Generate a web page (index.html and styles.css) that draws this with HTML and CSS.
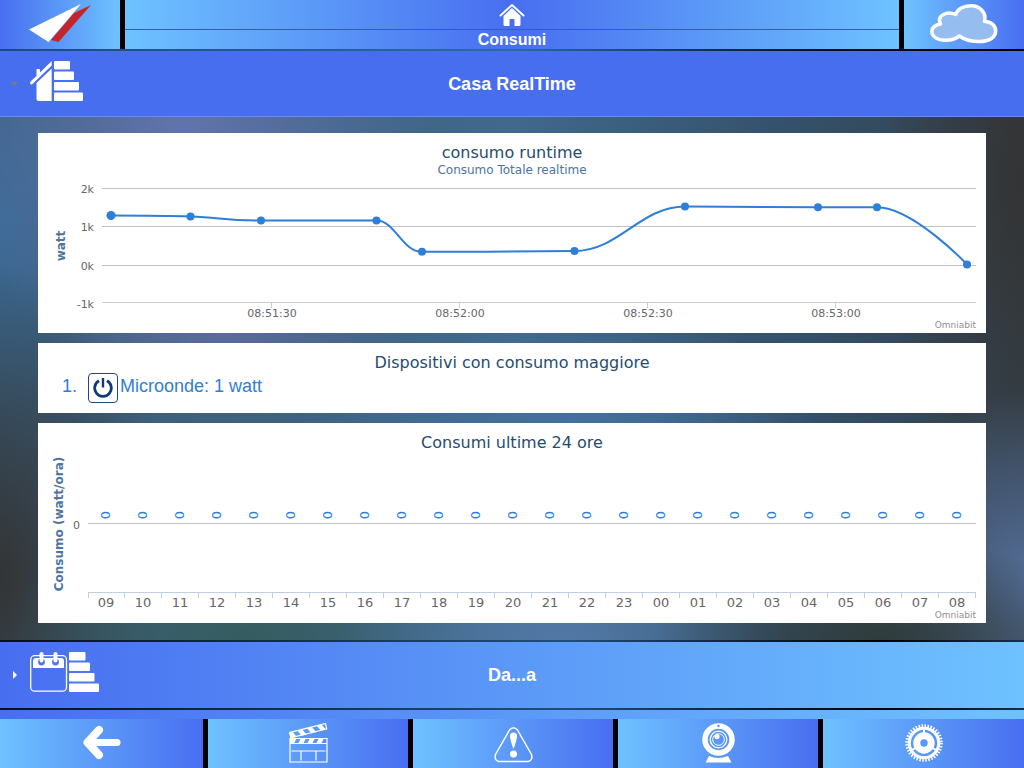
FILE: index.html
```html
<!DOCTYPE html>
<html lang="it">
<head>
<meta charset="utf-8">
<meta name="viewport" content="width=device-width, initial-scale=1">
<title>Consumi</title>
<link rel="stylesheet" href="styles.css">
</head>
<body>
<header class="topbar">
  <a class="topbar-side topbar-logo" href="#" aria-label="Omniabit">
    <svg width="62" height="40" viewBox="0 0 62 40" aria-hidden="true">
      <path fill="#c62429" d="M22 36L45 9L62 1L29.500 38Z"/>
      <path fill="#fff" d="M0 25.500L52 0L19.500 38Z"/>
    </svg>
  </a>
  <a class="topbar-home" href="#">
    <span class="home-icon">
      <svg width="26" height="23" viewBox="0 0 26 23" aria-hidden="true">
        <path fill="none" stroke="#fff" stroke-width="2" stroke-linecap="round" stroke-linejoin="round" d="M1.500 11.500L13 1L24.500 11.500"/>
        <path fill="#fff" d="M4.500 12L13 4L21.500 12V20.500Q21.500 22 20 22H15.500V16Q15.500 15 14.500 15H11.500Q10.500 15 10.500 16V22H6Q4.500 22 4.500 20.500Z"/>
      </svg>
    </span>
    <span class="home-label">Consumi</span>
  </a>
  <a class="topbar-side topbar-cloud" href="#" aria-label="Meteo">
    <svg width="68" height="40" viewBox="0 0 68 40" aria-hidden="true">
      <path fill="#95bdef" stroke="#fff" stroke-width="3.500" stroke-linejoin="round" d="M10.500 20C5 20.500 1.800 24 1.800 27.500C2 33.500 9 36.500 16 36.300C22 36.200 26 34.500 29.300 32C35 36 42 37.600 49 37.600C60 37.600 65.700 33 65.700 27C65.700 21.500 61 17.500 54.500 17.500C57 9 50 1.800 41 1.800C33 1.800 27 5.500 25.700 10.500C17.500 7 6 11 10.500 20Z"/>
    </svg>
  </a>
</header>

<main class="sections">
  <button class="section-bar section-open" type="button" aria-expanded="true">
    <span class="section-lead">
      <span class="marker marker-down"></span>
      <svg width="54" height="40" viewBox="0 0 54 40" fill="#fff" aria-hidden="true">
        <path d="M21.700 0V4.500L2.500 23Q1 24 0 22.500Q0 21 1 20L6.500 15V9Q6.500 8 7.500 8H9Q10 8 10 9V11.500Z"/>
        <path d="M21.700 7.500V40H9Q6.500 40 6.500 37.500V22Z"/>
        <rect x="24" width="16" height="8.500" rx="1"/>
        <rect x="24" y="10.500" width="20" height="8.500" rx="1"/>
        <rect x="24" y="21" width="25" height="8.500" rx="1"/>
        <rect x="24" y="31.500" width="29" height="8.500" rx="1"/>
      </svg>
    </span>
    <span class="section-title">Casa RealTime</span>
  </button>

  <div class="panels">
    <section class="panel">
      <h2 class="panel-title">consumo runtime</h2>
      <p class="panel-subtitle">Consumo Totale realtime</p>
      <svg class="chart" viewBox="0 0 948 156" role="img" aria-label="Consumo Totale realtime">
        <path class="grid-line" d="M64 11.500H938M64 49.500H938M64 88.500H938"/>
        <path class="axis-line" d="M64 125.500H938M233.500 126v5M421.500 126v5M609.500 126v5M797.500 126v5"/>
        <g class="tick-label tick-y">
          <text x="56" y="16">2k</text>
          <text x="56" y="54">1k</text>
          <text x="56" y="93">0k</text>
          <text x="56" y="131">-1k</text>
        </g>
        <g class="tick-label tick-x">
          <text x="234" y="140">08:51:30</text>
          <text x="422" y="140">08:52:00</text>
          <text x="610" y="140">08:52:30</text>
          <text x="798" y="140">08:53:00</text>
        </g>
        <text class="axis-title" transform="rotate(-90)" x="-69" y="27">watt</text>
        <path class="series-line" d="M73 38.500C73 38.500 125 38.500 152.500 39.500C182 40.500 187 43.500 223 43.500H338.500C357 43.500 364 74.800 384 74.800C430 74.800 500 74.500 536.500 74C581 74 602 29.500 647 29.500C700 29.500 740 30.200 780 30.200H839C875 30.200 929 87.500 929 87.500"/>
        <g class="series-point">
          <circle cx="73" cy="38.500" r="4.500"/>
          <circle cx="152.500" cy="39.500" r="4"/>
          <circle cx="223" cy="43.500" r="4"/>
          <circle cx="338.500" cy="43.500" r="4"/>
          <circle cx="384" cy="74.800" r="4"/>
          <circle cx="536.500" cy="74" r="4"/>
          <circle cx="647" cy="29.500" r="4"/>
          <circle cx="780" cy="30.200" r="4"/>
          <circle cx="839" cy="30.200" r="4"/>
          <circle cx="929" cy="87.500" r="4"/>
        </g>
        <text class="credit" x="938" y="151">Omniabit</text>
      </svg>
    </section>

    <section class="panel">
      <h2 class="panel-title">Dispositivi con consumo maggiore</h2>
      <ol class="devices">
        <li class="device">
          <button class="power" type="button" aria-label="Spegni Microonde">
            <svg width="20" height="20" viewBox="0 0 20 20" fill="none" stroke="#0f3b78" aria-hidden="true">
              <path stroke-width="2.800" d="M6 2.800A8.300 8.300 0 1 0 14 2.800"/>
              <path stroke-width="2.400" d="M10 0V9.500"/>
            </svg>
          </button>
          <span>Microonde: 1 watt</span>
        </li>
      </ol>
    </section>

    <section class="panel">
      <h2 class="panel-title">Consumi ultime 24 ore</h2>
      <svg class="chart" viewBox="0 0 948 170" role="img" aria-label="Consumi ultime 24 ore">
        <path class="grid-line" d="M50 70.500H938"/>
        <path class="axis-line" d="M50 139.500H938M50.500 140v5M86.500 140v5M123.500 140v5M160.500 140v5M197.500 140v5M234.500 140v5M271.500 140v5M308.500 140v5M345.500 140v5M382.500 140v5M419.500 140v5M456.500 140v5M493.500 140v5M530.500 140v5M567.500 140v5M604.500 140v5M641.500 140v5M678.500 140v5M715.500 140v5M752.500 140v5M789.500 140v5M826.500 140v5M863.500 140v5M900.500 140v5M937.500 140v5"/>
        <text class="tick-label tick-y" x="42" y="76">0</text>
        <text class="axis-title" transform="rotate(-90)" x="-71" y="25">Consumo (watt/ora)</text>
        <g class="value-label" transform="rotate(-90)">
          <text x="-62" y="72">0</text><text x="-62" y="109">0</text>
          <text x="-62" y="146">0</text><text x="-62" y="183">0</text>
          <text x="-62" y="220">0</text><text x="-62" y="257">0</text>
          <text x="-62" y="294">0</text><text x="-62" y="331">0</text>
          <text x="-62" y="368">0</text><text x="-62" y="405">0</text>
          <text x="-62" y="442">0</text><text x="-62" y="479">0</text>
          <text x="-62" y="516">0</text><text x="-62" y="553">0</text>
          <text x="-62" y="590">0</text><text x="-62" y="627">0</text>
          <text x="-62" y="664">0</text><text x="-62" y="701">0</text>
          <text x="-62" y="738">0</text><text x="-62" y="775">0</text>
          <text x="-62" y="812">0</text><text x="-62" y="849">0</text>
          <text x="-62" y="886">0</text><text x="-62" y="923">0</text>
        </g>
        <g class="hour-label">
          <text x="68" y="154">09</text><text x="105" y="154">10</text>
          <text x="142" y="154">11</text><text x="179" y="154">12</text>
          <text x="216" y="154">13</text><text x="253" y="154">14</text>
          <text x="290" y="154">15</text><text x="327" y="154">16</text>
          <text x="364" y="154">17</text><text x="401" y="154">18</text>
          <text x="438" y="154">19</text><text x="475" y="154">20</text>
          <text x="512" y="154">21</text><text x="549" y="154">22</text>
          <text x="586" y="154">23</text><text x="623" y="154">00</text>
          <text x="660" y="154">01</text><text x="697" y="154">02</text>
          <text x="734" y="154">03</text><text x="771" y="154">04</text>
          <text x="808" y="154">05</text><text x="845" y="154">06</text>
          <text x="882" y="154">07</text><text x="919" y="154">08</text>
        </g>
        <text class="credit" x="938" y="165">Omniabit</text>
      </svg>
    </section>
  </div>

  <button class="section-bar section-closed" type="button" aria-expanded="false">
    <span class="section-lead">
      <span class="marker marker-right"></span>
      <svg width="70" height="40" viewBox="0 0 70 40" fill="#fff" aria-hidden="true">
        <rect x=".7" y="3.700" width="35.800" height="35.500" rx="4" fill="none" stroke="#fff" stroke-width="1.300"/>
        <path d="M3 9Q3 6 6 6H31Q34 6 34 9V16H3Z"/>
        <circle cx="11.500" cy="10" r="3.400" fill="#4b74f1"/>
        <circle cx="25.500" cy="10" r="3.400" fill="#4b74f1"/>
        <rect x="9.500" width="4" height="10.500" rx="2"/>
        <rect x="23.500" width="4" height="10.500" rx="2"/>
        <rect x="39" width="16.500" height="8.500" rx="1"/>
        <rect x="39" y="10.500" width="21" height="8.500" rx="1"/>
        <rect x="39" y="21" width="25.500" height="8.500" rx="1"/>
        <rect x="39" y="31.500" width="30" height="8.500" rx="1"/>
      </svg>
    </span>
    <span class="section-title">Da...a</span>
  </button>
</main>

<nav class="toolbar">
  <button class="tool" type="button" aria-label="Indietro">
    <svg width="40" height="40" viewBox="0 0 40 40" fill="none" stroke="#fff" aria-hidden="true">
      <path stroke-width="8" stroke-linecap="round" stroke-linejoin="round" d="M17 7L5.500 19.500L17 32"/>
      <path stroke-width="7" stroke-linecap="round" d="M9 19.500H35"/>
    </svg>
  </button>
  <button class="tool" type="button" aria-label="Scenari">
    <svg width="40" height="40" viewBox="0 0 40 40" fill="none" stroke="#fff" aria-hidden="true">
      <path stroke-width="1.200" d="M2 15.500H39V39H2ZM2 20.500H39M3.500 28H37.500M13 28V37.500M28 28V37.500"/>
      <path fill="#fff" stroke="none" d="M2 15H9L5.500 21H2ZM13 15H18L15 21H10ZM22 15H27L24 21H19ZM31 15H36L33 21H28Z"/>
      <g transform="translate(1.500 9.500) rotate(-14)">
        <path stroke-width="1.200" d="M0 0H37V5.500H0Z"/>
        <path fill="#fff" stroke="none" d="M0 0H3L6 6H0ZM8 0H13L16 6H11ZM18 0H23L26 6H21ZM28 0H33L36 6H31Z"/>
      </g>
    </svg>
  </button>
  <button class="tool" type="button" aria-label="Allarmi">
    <svg width="40" height="40" viewBox="0 0 40 40" aria-hidden="true">
      <path fill="none" stroke="#fff" stroke-width="1.500" stroke-linejoin="round" d="M16.500 7Q20.500 2.500 24.500 7L38.500 31.500Q40 37.500 35 38.500H6Q1 37.500 2.500 31.500Z"/>
      <path fill="#fff" d="M17 13Q17 9.500 20.500 9.500Q24 9.500 24 13Q24 17 20.500 26Q17 17 17 13Z"/>
      <circle cx="20.500" cy="31" r="3.500" fill="#fff"/>
    </svg>
  </button>
  <button class="tool" type="button" aria-label="Telecamere">
    <svg width="40" height="40" viewBox="0 0 40 40" fill="none" stroke="#fff" aria-hidden="true">
      <circle cx="20.500" cy="16.500" r="13.500" stroke-width="5.500"/>
      <circle cx="20.500" cy="16.500" r="8.300" stroke-width="1.300"/>
      <circle cx="20.500" cy="16.500" r="5.800" stroke-width="1"/>
      <circle cx="19" cy="13.500" r="2.600" fill="#fff" stroke="none"/>
      <circle cx="20.500" cy="3" r="1.200" fill="#5b93f6" stroke="none"/>
      <path fill="#fff" stroke="none" d="M11 33Q20 37 30 33L33.500 39.500H7.500Z"/>
    </svg>
  </button>
  <button class="tool" type="button" aria-label="Impostazioni">
    <svg width="40" height="40" viewBox="0 0 40 40" fill="none" stroke="#fff" aria-hidden="true">
      <circle cx="20" cy="20" r="17" stroke-width="3.500" stroke-dasharray="1.500 1.467"/>
      <circle cx="20" cy="20" r="14.700" stroke-width="3"/>
      <circle cx="20" cy="20" r="7.200" stroke-width="7"/>
      <path stroke-width="2" d="M20 11V6M27 24L32 27M13 24L8 27"/>
    </svg>
  </button>
</nav>
</body>
</html>
```
FILE: styles.css
```css
:root {
  --deep: #486ef0;
  --light: #6ec2ff;
  --sans: "Liberation Sans", Arial, sans-serif;
  --chart: "DejaVu Sans", Verdana, sans-serif;
}

* {
  box-sizing: border-box;
}

body {
  margin: 0;
  min-height: 100vh;
  display: flex;
  flex-direction: column;
  background: linear-gradient(to right, var(--deep), var(--light));
  font-family: var(--sans);
  color: #fff;
}

button {
  border: 0;
  padding: 0;
  font: inherit;
  color: inherit;
  cursor: pointer;
}

svg {
  display: block;
}

/* Top bar */

.topbar {
  display: grid;
  grid-template-columns: 120px 1fr 120px;
  gap: 5px;
  height: 49px;
  background: #000;
}

.topbar-side {
  display: flex;
  align-items: center;
  justify-content: center;
  padding-bottom: 2px;
}

.topbar-logo {
  background: linear-gradient(to right, var(--deep), var(--light));
}

.topbar-cloud {
  background: linear-gradient(to right, var(--light), var(--deep));
}

.topbar-home {
  display: grid;
  grid-template-rows: 30px 19px;
  justify-items: center;
  background: linear-gradient(to right, var(--light), var(--deep), var(--light));
  color: #fff;
  text-decoration: none;
}

.home-icon {
  display: flex;
  justify-content: center;
  width: 100%;
  padding-top: 4px;
  border-bottom: 1px solid #2f61a6;
}

.home-label {
  font-size: 16px;
  font-weight: bold;
  line-height: 20px;
}

/* Collapsible sections */

.section-bar {
  display: grid;
  grid-template-columns: 1fr auto 1fr;
  align-items: center;
  width: 100%;
  text-align: left;
}

.section-open {
  height: 68px;
  padding-bottom: 6px;
  border-top: 2px solid;
  border-image: linear-gradient(to right, #1b4a80, #2b6c9c 50%, #02101c 80%, #000) 2 0 0 0;
  background: var(--deep);
  box-shadow: inset 0 -1px #6c8af3;
}

.section-closed {
  height: 70px;
  padding-bottom: 6px;
  border-top: 2px solid;
  border-bottom: 2px solid;
  border-image: linear-gradient(to right, #0a1018, #0c3038 25%, #204e7c 55%, #000 86%, #1c2c50) 2 0;
  background: linear-gradient(to right, var(--deep), var(--light));
}

.section-lead {
  display: flex;
  align-items: center;
  padding-left: 11px;
}

.marker {
  width: 19px;
  height: 8px;
}

.marker::before {
  content: "";
  display: block;
  background: #fff;
}

.marker-down::before {
  width: 7px;
  height: 4px;
  margin-top: 5px;
  background: #7d7a78;
  clip-path: polygon(0 0, 100% 0, 50% 100%);
}

.marker-right::before {
  width: 4px;
  height: 8px;
  margin-top: 3px;
  margin-left: 2px;
  clip-path: polygon(0 0, 100% 50%, 0 100%);
}

.section-title {
  padding-top: 6px;
  font-size: 18px;
  font-weight: bold;
  line-height: 20px;
}

/* Panels */

.panels {
  display: flex;
  flex-direction: column;
  gap: 10px;
  padding: 16px 38px 17px;
  background:
    radial-gradient(ellipse 22% 20% at 86% 100%, #303c3b, transparent),
    radial-gradient(ellipse 16% 38% at 101% 90%, #56709c, transparent),
    radial-gradient(ellipse 22% 30% at 55% 100%, #5279a6, transparent),
    radial-gradient(ellipse 24% 24% at 24% 100%, #355d5f, transparent),
    radial-gradient(ellipse 16% 60% at 0% 88%, #333435, transparent),
    radial-gradient(ellipse 24% 50% at 18% 0%, #6274ae, transparent),
    radial-gradient(ellipse 12% 50% at 0% 20%, #3a6a96, transparent),
    radial-gradient(ellipse 18% 16% at 22% 42%, #5a6999, transparent),
    radial-gradient(ellipse 24% 20% at 56% 58%, #43709e, transparent),
    radial-gradient(ellipse 15% 70% at 101% 12%, #333, transparent),
    linear-gradient(to right, #3b5a72, #40698c 50%, #34506a 78%, #35424c);
}

.panel {
  padding-top: 10px;
  background: #fff;
  color: #2f7ed8;
}

.panel-title {
  margin: 0;
  font-family: var(--chart);
  font-size: 16px;
  font-weight: normal;
  line-height: 20px;
  text-align: center;
  color: #274b6d;
}

.panel-subtitle {
  margin: 0;
  font-family: var(--chart);
  font-size: 12px;
  line-height: 14px;
  text-align: center;
  color: #4d759e;
}

.devices {
  margin: 0;
  padding: 0 24px 10px;
  list-style: none;
  counter-reset: device;
  font-size: 18px;
  line-height: 26px;
}

.device {
  display: flex;
  counter-increment: device;
}

.device::before {
  content: counter(device) ".";
  width: 26px;
}

.power {
  display: flex;
  align-items: center;
  justify-content: center;
  width: 30px;
  height: 30px;
  margin-right: 2px;
  border: 1px solid #1d4a86;
  border-radius: 4px;
  background: #fff;
}

/* Charts */

.chart {
  width: 100%;
  height: auto;
  font-family: var(--chart);
}

.grid-line {
  fill: none;
  stroke: #c0c0c0;
}

.axis-line {
  fill: none;
  stroke: #c0d0e0;
}

.tick-label {
  font-size: 11px;
  fill: #666;
}

.tick-y {
  text-anchor: end;
}

.tick-x,
.axis-title,
.value-label,
.hour-label {
  text-anchor: middle;
}

.axis-title {
  font-size: 12px;
  font-weight: bold;
  fill: #4d759e;
}

.value-label {
  font-size: 13px;
  fill: #2f7ed8;
}

.hour-label {
  font-size: 13px;
  fill: #666;
}

.credit {
  font-size: 9px;
  fill: #909090;
  text-anchor: end;
}

.series-line {
  fill: none;
  stroke: #2f7ed8;
  stroke-width: 2;
}

.series-point {
  fill: #2f7ed8;
}

/* Bottom toolbar */

.toolbar {
  display: grid;
  grid-template-columns: 203fr 200fr 200fr 200fr 201fr;
  gap: 5px;
  height: 49px;
  margin-top: auto;
  background: #000;
}

.tool {
  display: flex;
  align-items: center;
  justify-content: center;
  padding-bottom: 1px;
  background: linear-gradient(to right, var(--light), var(--deep));
}
```
